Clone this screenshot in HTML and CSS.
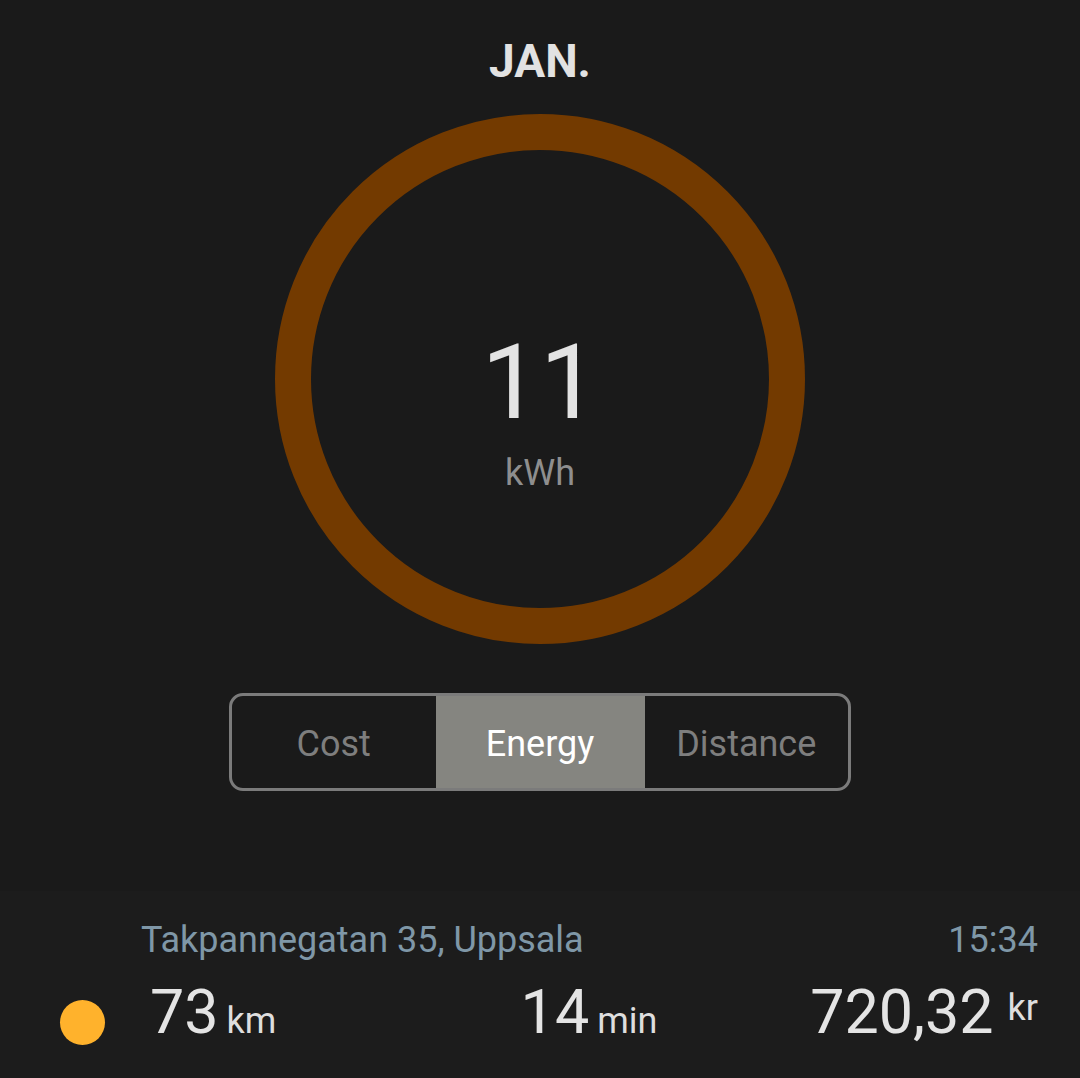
FILE: index.html
```html
<!DOCTYPE html>
<html lang="en">
    <head>
        <meta charset="UTF-8">
        <meta name="viewport" content="width=device-width, initial-scale=1.0">
        <link rel="stylesheet" href="styles.css">
        <title>Monthly usage</title>
    </head>
    <body>
        <main class="summary">
            <h1 class="month">JAN.</h1>

            <div class="ring">
                <svg class="ring-svg" width="530" height="530" viewBox="0 0 530 530">
                    <circle cx="265" cy="265" r="247" fill="none" stroke="#733a00" stroke-width="36" />
                </svg>
                <div class="ring-label">
                    <span class="ring-value">11</span>
                    <span class="ring-unit">kWh</span>
                </div>
            </div>

            <div class="segments">
                <button class="segment">Cost</button>
                <button class="segment active">Energy</button>
                <button class="segment">Distance</button>
            </div>
        </main>

        <section class="trip">
            <div class="trip-head">
                <span class="trip-address">Takpannegatan 35, Uppsala</span>
                <span class="trip-time">15:34</span>
            </div>
            <div class="trip-stats">
                <span class="dot"></span>
                <div class="stat stat-left"><span class="num">73</span><span class="unit">km</span></div>
                <div class="stat stat-mid"><span class="num">14</span><span class="unit">min</span></div>
                <div class="stat stat-right"><span class="num">720,32</span><span class="unit sup">kr</span></div>
            </div>
        </section>
    </body>
</html>
```

FILE: styles.css
```css
html, body {
    margin: 0;
    padding: 0;
}

body {
    width: 1080px;
    height: 1078px;
    background-color: #1a1a1a;
    font-family: Roboto, "Noto Sans", sans-serif;
    display: flex;
    flex-direction: column;
    overflow: hidden;
}

.summary {
    display: flex;
    flex-direction: column;
    align-items: center;
}

.month {
    margin: 38px 0 0 0;
    font-size: 46px;
    line-height: 1;
    font-weight: 700;
    color: #e2e2e2;
}

/* ring and the number inside share one grid cell */
.ring {
    margin-top: 30px;
    display: grid;
    width: 530px;
    height: 530px;
}

.ring-svg,
.ring-label {
    grid-area: 1 / 1;
}

.ring-label {
    display: flex;
    flex-direction: column;
    align-items: center;
    padding-top: 217px;
}

.ring-value {
    font-size: 104px;
    line-height: 1;
    color: #e3e3e3;
}

.ring-unit {
    margin-top: 20px;
    font-size: 36px;
    line-height: 1;
    color: #8e8e8e;
}

.segments {
    margin-top: 49px;
    width: 622px;
    height: 98px;
    box-sizing: border-box;
    border: 3px solid #7b7b7b;
    border-radius: 14px;
    overflow: hidden;
    display: grid;
    grid-template-columns: 1fr 209px 1fr;
}

.segment {
    border: none;
    margin: 0;
    padding: 4px 0 0 0;
    background: transparent;
    font-family: inherit;
    font-size: 36px;
    color: #7e7e7e;
    display: flex;
    align-items: center;
    justify-content: center;
}

.segment.active {
    background-color: #858580;
    color: #ffffff;
}

.trip {
    margin-top: 100px;
    flex: 1;
    background-color: #1c1c1c;
    padding: 31px 42px 0 60px;
}

.trip-head {
    display: flex;
    justify-content: space-between;
    margin-left: 81px;
    font-size: 36px;
    line-height: 1;
    color: #7f97a7;
}

.trip-stats {
    margin-top: 22px;
    display: grid;
    grid-template-columns: 45px 1fr auto 1fr;
    align-items: center;
}

.dot {
    width: 45px;
    height: 45px;
    margin-top: 20px;
    border-radius: 50%;
    background-color: #ffb22c;
}

.stat {
    line-height: 1;
    color: #e4e4e4;
    white-space: nowrap;
}

.stat-left {
    padding-left: 45px;
}

.stat-mid {
    margin-left: 35px;
}

.stat-right {
    text-align: right;
}

.num {
    font-size: 61px;
}

.unit {
    font-size: 36px;
    margin-left: 8px;
    color: #dedede;
}

.unit.sup {
    margin-left: 14px;
    vertical-align: 13px;
}
```
